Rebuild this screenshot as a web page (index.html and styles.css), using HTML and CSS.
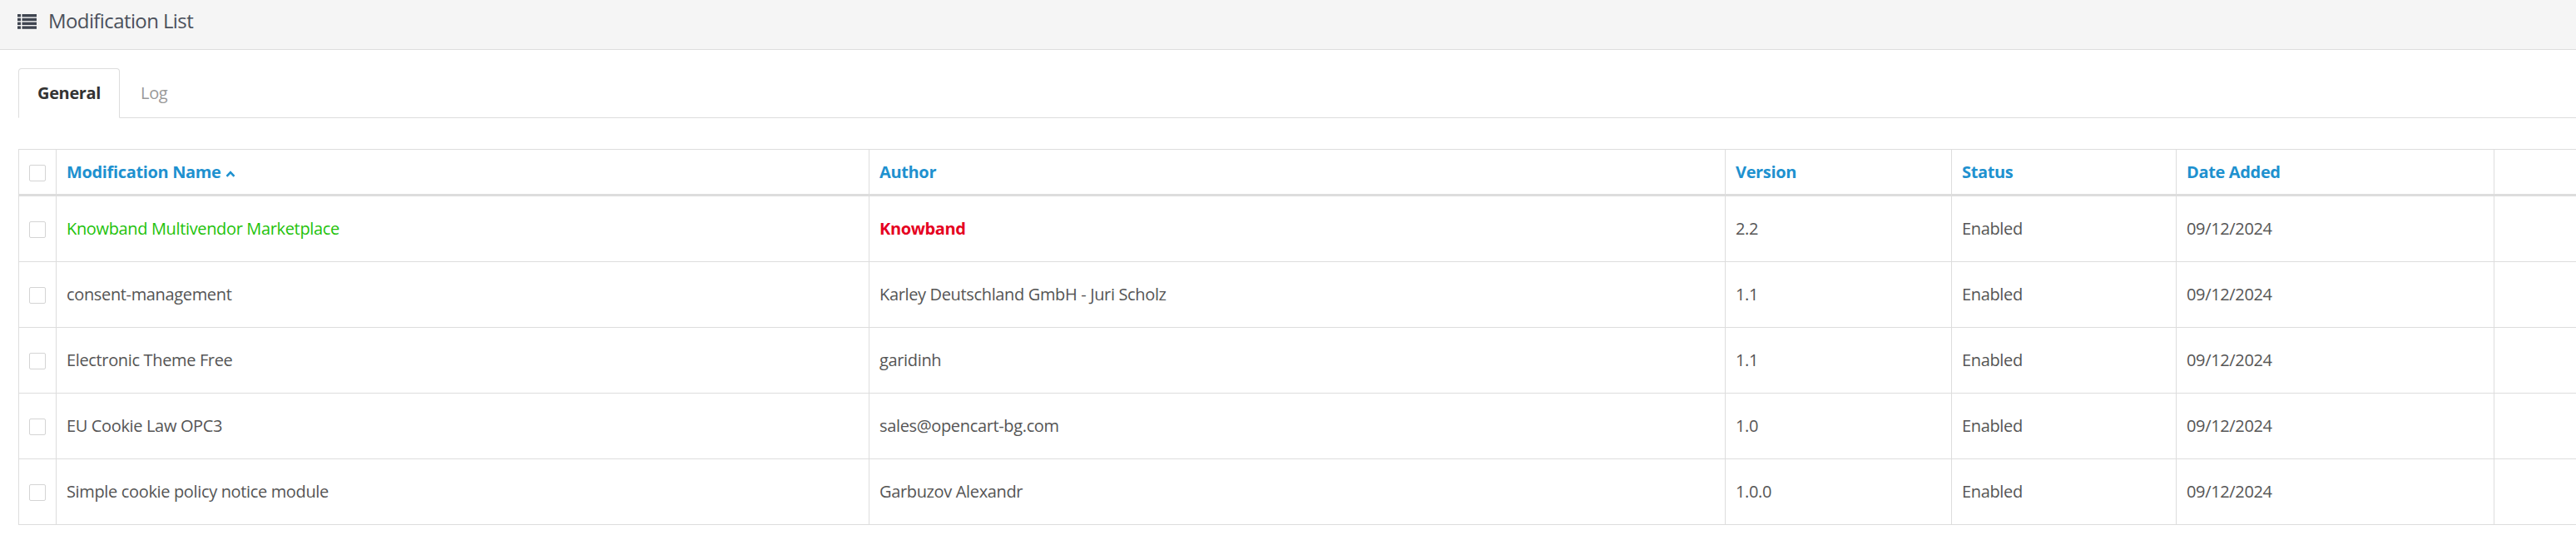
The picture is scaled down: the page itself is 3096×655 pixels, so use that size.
FILE: index.html
```html
<!DOCTYPE html>
<html lang="en">
<head>
<meta charset="utf-8">
<title>Modification List</title>
<link rel="stylesheet" href="styles.css">
</head>
<body>
<div class="panel-heading">
  <svg class="list-icon" width="23" height="18" viewBox="0 0 23 18" aria-hidden="true">
    <rect x="0" y="0" width="4" height="3.4"/><rect x="5.5" y="0" width="17.5" height="3.4"/>
    <rect x="0" y="4.8" width="4" height="3.4"/><rect x="5.5" y="4.8" width="17.5" height="3.4"/>
    <rect x="0" y="9.6" width="4" height="3.4"/><rect x="5.5" y="9.6" width="17.5" height="3.4"/>
    <rect x="0" y="14.4" width="4" height="3.4"/><rect x="5.5" y="14.4" width="17.5" height="3.4"/>
  </svg>
  <h3 class="panel-title">Modification List</h3>
</div>
<div class="panel-body">
  <ul class="nav-tabs">
    <li class="active"><a href="#">General</a></li>
    <li><a href="#">Log</a></li>
  </ul>
  <div class="tab-content">
    <table class="list">
      <colgroup>
        <col class="c-check"><col class="c-name"><col class="c-author"><col class="c-version"><col class="c-status"><col class="c-date"><col>
      </colgroup>
      <thead>
        <tr>
          <th class="check"><input type="checkbox"></th>
          <th><a href="#">Modification Name <svg class="caret" width="12" height="8" viewBox="0 0 12 8"><polyline points="1.5,6.8 6,2.2 10.5,6.8"/></svg></a></th>
          <th><a href="#">Author</a></th>
          <th><a href="#">Version</a></th>
          <th><a href="#">Status</a></th>
          <th><a href="#">Date Added</a></th>
          <th></th>
        </tr>
      </thead>
      <tbody>
        <tr>
          <td class="check"><input type="checkbox"></td>
          <td class="green">Knowband Multivendor Marketplace</td>
          <td class="red">Knowband</td>
          <td>2.2</td>
          <td>Enabled</td>
          <td>09/12/2024</td>
          <td></td>
        </tr>
        <tr>
          <td class="check"><input type="checkbox"></td>
          <td>consent-management</td>
          <td>Karley Deutschland GmbH - Juri Scholz</td>
          <td>1.1</td>
          <td>Enabled</td>
          <td>09/12/2024</td>
          <td></td>
        </tr>
        <tr>
          <td class="check"><input type="checkbox"></td>
          <td>Electronic Theme Free</td>
          <td>garidinh</td>
          <td>1.1</td>
          <td>Enabled</td>
          <td>09/12/2024</td>
          <td></td>
        </tr>
        <tr>
          <td class="check"><input type="checkbox"></td>
          <td>EU Cookie Law OPC3</td>
          <td>sales@opencart-bg.com</td>
          <td>1.0</td>
          <td>Enabled</td>
          <td>09/12/2024</td>
          <td></td>
        </tr>
        <tr>
          <td class="check"><input type="checkbox"></td>
          <td>Simple cookie policy notice module</td>
          <td>Garbuzov Alexandr</td>
          <td>1.0.0</td>
          <td>Enabled</td>
          <td>09/12/2024</td>
          <td></td>
        </tr>
      </tbody>
    </table>
  </div>
</div>
</body>
</html>
```

FILE: styles.css
```css
html, body {
  margin: 0;
  padding: 0;
  background: #fff;
  overflow: hidden;
}
body {
  font-family: "Open Sans", "DejaVu Sans", sans-serif;
  font-size: 20px;
  letter-spacing: -0.35px;
  color: #555;
}
.panel-heading {
  box-sizing: border-box;
  height: 60px;
  background: #f5f5f5;
  border-bottom: 1px solid #ddd;
  display: flex;
  align-items: flex-start;
  padding: 8px 21px 0;
  gap: 14px;
}
.list-icon {
  fill: #3f4550;
  margin-top: 9px;
  flex: none;
}
.panel-title {
  margin: 0;
  font-size: 24px;
  letter-spacing: -0.6px;
  font-weight: 400;
  line-height: 34px;
  color: #4b515c;
}
.panel-body {
  padding: 22px 0 0 22px;
}
.nav-tabs {
  list-style: none;
  margin: 0;
  padding: 0;
  display: flex;
  border-bottom: 1px solid #ddd;
}
.nav-tabs li {
  margin-bottom: -1px;
  margin-right: 2px;
}
.nav-tabs a {
  display: block;
  padding: 15px 22px;
  line-height: 28px;
  border: 1px solid transparent;
  border-radius: 4px 4px 0 0;
  color: #999;
  text-decoration: none;
}
.nav-tabs li.active a {
  border-color: #ddd #ddd transparent;
  background: #fff;
  color: #333;
  font-weight: 700;
}
.tab-content {
  padding-top: 37px;
}
.list {
  border-collapse: collapse;
  table-layout: fixed;
  width: calc(100% + 120px);
  border: 1px solid #ddd;
}
.c-check { width: 45px; }
.c-name { width: 977px; }
.c-author { width: 1029px; }
.c-version { width: 272px; }
.c-status { width: 270px; }
.c-date { width: 382px; }
.list th, .list td {
  border: 1px solid #ddd;
  text-align: left;
  padding: 12px 12px;
  line-height: 29px;
  white-space: nowrap;
  overflow: hidden;
}
.list thead th {
  border-bottom: 3px solid #ddd;
  font-weight: 700;
}
.list td {
  padding-top: 24px;
  padding-bottom: 25px;
}
.list th a {
  color: #1e91cf;
  text-decoration: none;
}
.caret {
  fill: none;
  stroke: #1e91cf;
  stroke-width: 2.6;
  margin-left: 1px;
  vertical-align: 1px;
}
.list .check {
  text-align: center;
  padding-left: 0;
  padding-right: 0;
}
.list input[type="checkbox"] {
  appearance: none;
  -webkit-appearance: none;
  box-sizing: border-box;
  width: 20px;
  height: 20px;
  margin: 0;
  border: 1px solid #d4d4d4;
  border-radius: 2px;
  background: #fff;
  vertical-align: middle;
  position: relative;
  top: -1px;
}
.green {
  color: #22c20a;
}
.red {
  color: #e5001f;
  font-weight: 700;
}
```
